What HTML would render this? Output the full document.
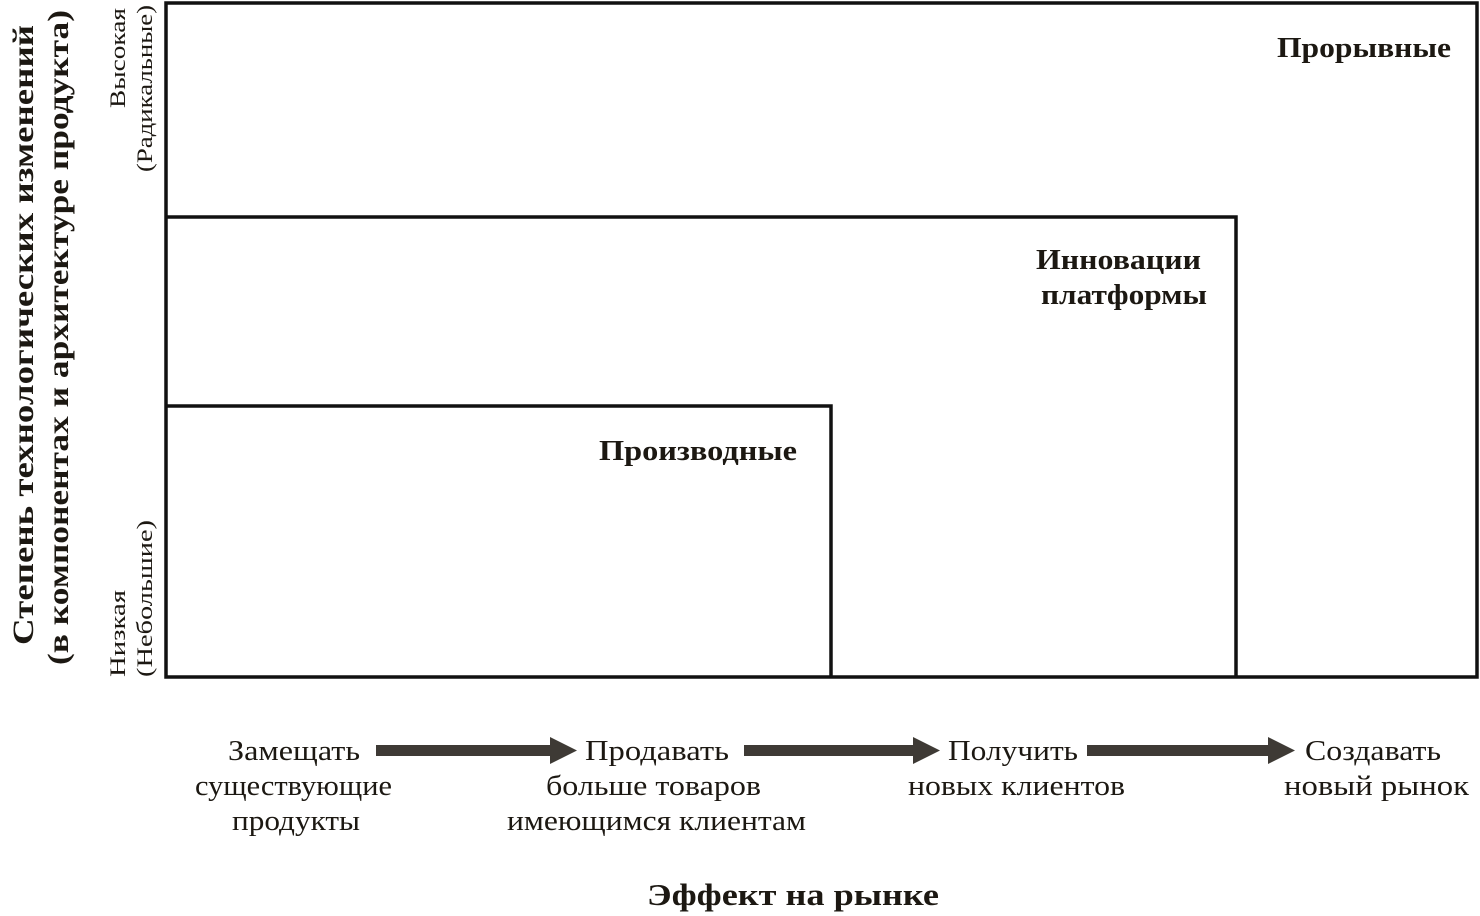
<!DOCTYPE html>
<html><head><meta charset="utf-8"><style>
html,body{margin:0;padding:0;background:#fff;}
svg{display:block;}
text{font-family:"Liberation Serif","DejaVu Serif",serif;fill:#1c1812;}
.b{font-weight:bold;}
</style></head><body>
<svg width="1480" height="916" viewBox="0 0 1480 916" xmlns="http://www.w3.org/2000/svg">
<g fill="none" stroke="#111" stroke-width="3.5">
<rect x="166" y="3" width="1311" height="674"/>
<polyline points="166,217 1236,217 1236,677"/>
<polyline points="166,406 831,406 831,677"/>
</g>
<g font-size="28">
<text class="b" x="1277" y="57" textLength="174" lengthAdjust="spacingAndGlyphs">Прорывные</text>
<text class="b" x="1036" y="269" textLength="165" lengthAdjust="spacingAndGlyphs">Инновации</text>
<text class="b" x="1041" y="304" textLength="166" lengthAdjust="spacingAndGlyphs">платформы</text>
<text class="b" x="599" y="460" textLength="198" lengthAdjust="spacingAndGlyphs">Производные</text>
</g>
<g font-size="30">
<text class="b" transform="translate(33,645) rotate(-90)" textLength="620" lengthAdjust="spacingAndGlyphs">Степень технологических изменений</text>
<text class="b" transform="translate(68,665) rotate(-90)" textLength="655" lengthAdjust="spacingAndGlyphs">(в компонентах и архитектуре продукта)</text>
<text class="b" x="647" y="905" font-size="31" textLength="292" lengthAdjust="spacingAndGlyphs">Эффект на рынке</text>
</g>
<g font-size="22">
<text transform="translate(125,108) rotate(-90)" textLength="100" lengthAdjust="spacingAndGlyphs">Высокая</text>
<text transform="translate(152,172) rotate(-90)" textLength="167" lengthAdjust="spacingAndGlyphs">(Радикальные)</text>
<text transform="translate(125,677) rotate(-90)" textLength="87" lengthAdjust="spacingAndGlyphs">Низкая</text>
<text transform="translate(152,677) rotate(-90)" textLength="157" lengthAdjust="spacingAndGlyphs">(Небольшие)</text>
</g>
<g font-size="28">
<text x="228" y="760" textLength="132" lengthAdjust="spacingAndGlyphs">Замещать</text>
<text x="195" y="795" textLength="197" lengthAdjust="spacingAndGlyphs">существующие</text>
<text x="232" y="830" textLength="128" lengthAdjust="spacingAndGlyphs">продукты</text>
<text x="585" y="760" textLength="144" lengthAdjust="spacingAndGlyphs">Продавать</text>
<text x="546" y="795" textLength="215" lengthAdjust="spacingAndGlyphs">больше товаров</text>
<text x="507" y="830" textLength="299" lengthAdjust="spacingAndGlyphs">имеющимся клиентам</text>
<text x="948" y="760" textLength="130" lengthAdjust="spacingAndGlyphs">Получить</text>
<text x="908" y="795" textLength="217" lengthAdjust="spacingAndGlyphs">новых клиентов</text>
<text x="1305" y="760" textLength="136" lengthAdjust="spacingAndGlyphs">Создавать</text>
<text x="1284" y="795" textLength="185" lengthAdjust="spacingAndGlyphs">новый рынок</text>
</g>
<g fill="#3e3a35">
<polygon points="376,745 550,745 550,737 577,750.5 550,764 550,756 376,756"/>
<polygon points="744,745 913,745 913,737 940,750.5 913,764 913,756 744,756"/>
<polygon points="1087,745 1268,745 1268,737 1295,750.5 1268,764 1268,756 1087,756"/>
</g>
</svg>
</body></html>
